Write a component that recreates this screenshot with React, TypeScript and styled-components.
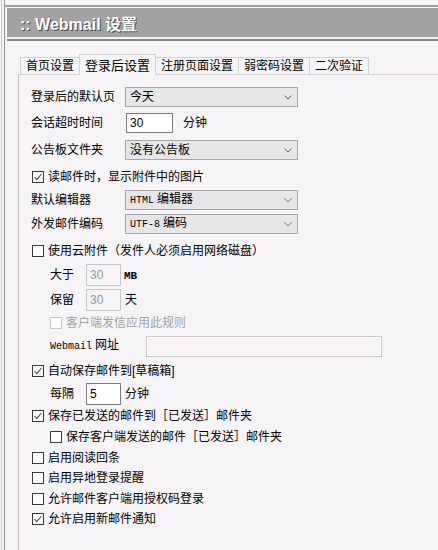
import styled, { createGlobalStyle } from "styled-components";

const GlobalStyle = createGlobalStyle`
    html, body {
        margin: 0;
        padding: 0;
        background: #f7f4f7;
    }
    body {
        font-family: "Liberation Sans", "Noto Sans CJK SC", sans-serif;
        font-size: 12px;
        color: #000;
    }
`;

const Shell = styled.div`
    min-height: 550px;
    margin-left: 1px;
    padding-left: 2px;
    border-left: 1px solid #cbc7cb;
    overflow: hidden;
`;

const Frame = styled.div`
    min-height: 550px;
    padding-top: 5px;
    border-left: 1px solid #8f8d8f;
    box-sizing: border-box;
`;

const TopRule = styled.div`
    height: 2px;
    margin-bottom: 1px;
    background: #a09ea0;
`;

const Header = styled.div`
    display: flex;
    align-items: center;
    height: 29px;
    margin-left: 2px;
    padding-left: 13px;
    background: #a3a1a3;
    color: #fff;
    font-family: "Liberation Sans", "Noto Sans CJK SC", sans-serif;
    font-weight: bold;
    font-size: 16px;
    text-shadow: 1px 1px 0 #4a484a;
    white-space: pre;
`;

const HeaderRule = styled.div`
    height: 2px;
    margin: 2px 0 0 2px;
    background: #868486;
`;

const Body = styled.div`
    padding-left: 13px;
`;

const TabBar = styled.div`
    display: flex;
    align-items: flex-end;
    height: 33px;
    padding-left: 3px;
`;

const Tab = styled.div<{ $active?: boolean }>`
    position: relative;
    z-index: 1;
    display: flex;
    align-items: center;
    box-sizing: border-box;
    height: ${p => (p.$active ? 21 : 17)}px;
    margin-bottom: ${p => (p.$active ? -1 : 0)}px;
    padding: 0 5px;
    border: 1px solid #d4d0d4;
    border-bottom: none;
    margin-left: -1px;
    background: #f7f4f7;
    font-size: ${p => (p.$active ? 13 : 12)}px;
    line-height: 1;
    white-space: nowrap;
`;

const Panel = styled.div`
    box-sizing: border-box;
    min-height: 476px;
    padding: 9px 0 20px 12px;
    border-top: 1px solid #d6d2d6;
    border-left: 1px solid #c4c0c4;
`;

const Row = styled.div<{ $h: number; $indent?: number }>`
    display: flex;
    align-items: center;
    height: ${p => p.$h}px;
    padding-left: ${p => p.$indent ?? 0}px;
    line-height: 14px;
    white-space: nowrap;
`;

const Label = styled.span<{ $w: number }>`
    display: inline-block;
    width: ${p => p.$w}px;
    flex-shrink: 0;
`;

const SelectBox = styled.div`
    display: flex;
    align-items: center;
    justify-content: space-between;
    box-sizing: border-box;
    width: 173px;
    height: 20px;
    padding: 0 5px 0 4px;
    border: 1px solid #a9a7a9;
    background: #e8e5e8;
`;

const Mono = styled.span<{ $size?: number; $bold?: boolean }>`
    font-family: "Liberation Mono", "DejaVu Sans Mono", monospace;
    font-size: ${p => p.$size ?? 10}px;
    font-weight: ${p => (p.$bold ? "bold" : "normal")};
    margin-right: 3px;
`;

const TextBox = styled.input<{ $w: number; $h?: number; $disabled?: boolean }>`
    box-sizing: border-box;
    width: ${p => p.$w}px;
    height: ${p => p.$h ?? 21}px;
    margin: 0;
    padding: 0 3px;
    border: 1px solid ${p => (p.$disabled ? "#cac6ca" : "#7c7a7c")};
    background: ${p => (p.$disabled ? "#f7f4f7" : "#fff")};
    color: ${p => (p.$disabled ? "#9a989a" : "#000")};
    font-family: "Liberation Sans", sans-serif;
    font-size: 12px;
    outline: none;
`;

const WideBox = styled.div`
    box-sizing: border-box;
    width: 236px;
    height: 21px;
    border: 1px solid #cac6ca;
    box-shadow: inset 0 0 0 1px #fff;
    background: #f7f4f7;
`;

const Unit = styled.span<{ $gap: number }>`
    margin-left: ${p => p.$gap}px;
`;

const CheckRow = styled.label<{ $muted?: boolean }>`
    display: flex;
    align-items: center;
    gap: 4px;
    margin-left: 1px;
    color: ${p => (p.$muted ? "#a3a1a3" : "#000")};
`;

function Chevron() {
    return (
        <svg width="8" height="5" viewBox="0 0 8 5">
            <polyline points="0.5,0.5 4,4 7.5,0.5" fill="none" stroke="#6a686a" strokeWidth="1" />
        </svg>
    );
}

function Select({ children }: { children: React.ReactNode }) {
    return (
        <SelectBox>
            <span>{children}</span>
            <Chevron />
        </SelectBox>
    );
}

function Check({ checked, muted, children }: { checked?: boolean; muted?: boolean; children: React.ReactNode }) {
    const edge = muted ? "#cac6ca" : "#3a383a";
    return (
        <CheckRow $muted={muted}>
            <svg width="12" height="12" viewBox="0 0 12 12">
                <rect x="0.5" y="0.5" width="11" height="11" fill="#fff" stroke={edge} />
                {checked && (
                    <polyline points="2.5,6 4.8,8.6 9.4,3" fill="none" stroke="#4a484a" strokeWidth="1.1" />
                )}
            </svg>
            <span>{children}</span>
        </CheckRow>
    );
}

const tabs = ["首页设置", "登录后设置", "注册页面设置", "弱密码设置", "二次验证"];

export default function App() {
    return (
        <>
            <GlobalStyle />
            <Shell>
                <Frame>
                    <TopRule />
                    <Header>{":: Webmail 设置"}</Header>
                    <HeaderRule />
                    <Body>
                        <TabBar>
                            {tabs.map((t, i) => (
                                <Tab key={t} $active={i === 1}>{t}</Tab>
                            ))}
                        </TabBar>
                        <Panel>
                            <Row $h={26}>
                                <Label $w={94}>登录后的默认页</Label>
                                <Select>今天</Select>
                            </Row>
                            <Row $h={26}>
                                <Label $w={95}>会话超时时间</Label>
                                <TextBox $w={47} $h={20} defaultValue="30" />
                                <Unit $gap={10}>分钟</Unit>
                            </Row>
                            <Row $h={28}>
                                <Label $w={94}>公告板文件夹</Label>
                                <Select>没有公告板</Select>
                            </Row>
                            <Row $h={26}>
                                <Check checked>读邮件时，显示附件中的图片</Check>
                            </Row>
                            <Row $h={20}>
                                <Label $w={94}>默认编辑器</Label>
                                <Select><Mono>HTML</Mono>编辑器</Select>
                            </Row>
                            <Row $h={28}>
                                <Label $w={94}>外发邮件编码</Label>
                                <Select><Mono>UTF-8</Mono>编码</Select>
                            </Row>
                            <Row $h={26}>
                                <Check>使用云附件（发件人必须启用网络磁盘）</Check>
                            </Row>
                            <Row $h={22} $indent={19}>
                                <Label $w={36}>大于</Label>
                                <TextBox $w={35} $h={22} $disabled readOnly value="30" />
                                <Unit $gap={3}><Mono $size={11} $bold>MB</Mono></Unit>
                            </Row>
                            <Row $h={28} $indent={19}>
                                <Label $w={36}>保留</Label>
                                <TextBox $w={35} $h={22} $disabled readOnly value="30" />
                                <Unit $gap={4}>天</Unit>
                            </Row>
                            <Row $h={18} $indent={18}>
                                <Check muted>客户端发信应用此规则</Check>
                            </Row>
                            <Row $h={28} $indent={19}>
                                <Label $w={96}><Mono>Webmail</Mono>网址</Label>
                                <WideBox />
                            </Row>
                            <Row $h={22}>
                                <Check checked>自动保存邮件到[草稿箱]</Check>
                            </Row>
                            <Row $h={24} $indent={19}>
                                <Label $w={36}>每隔</Label>
                                <TextBox $w={35} $h={22} defaultValue="5" />
                                <Unit $gap={4}>分钟</Unit>
                            </Row>
                            <Row $h={20}>
                                <Check checked>保存已发送的邮件到［已发送］邮件夹</Check>
                            </Row>
                            <Row $h={22} $indent={18}>
                                <Check>保存客户端发送的邮件［已发送］邮件夹</Check>
                            </Row>
                            <Row $h={19}>
                                <Check>启用阅读回条</Check>
                            </Row>
                            <Row $h={21}>
                                <Check>启用异地登录提醒</Check>
                            </Row>
                            <Row $h={21}>
                                <Check>允许邮件客户端用授权码登录</Check>
                            </Row>
                            <Row $h={20}>
                                <Check checked>允许启用新邮件通知</Check>
                            </Row>
                        </Panel>
                    </Body>
                </Frame>
            </Shell>
        </>
    );
}
